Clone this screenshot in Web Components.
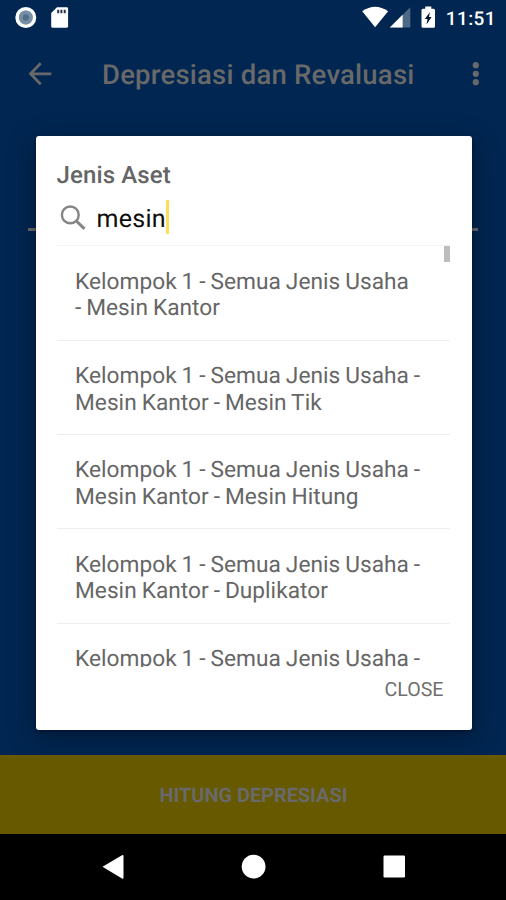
<!DOCTYPE html>
<html lang="id">
<head>
<meta charset="utf-8">
<title>Depresiasi dan Revaluasi</title>
<style>
html,body{margin:0;height:100%;overflow:hidden;background:#002651;font-family:Roboto,"Liberation Sans",sans-serif;text-rendering:geometricPrecision}
</style>
</head>
<body>
<depreciation-screen></depreciation-screen>
<script>
const define=(name,html)=>customElements.define(name,class extends HTMLElement{
  constructor(){super();const t=document.createElement('template');t.innerHTML=html;this.attachShadow({mode:'open'}).append(t.content.cloneNode(true));}
});

define('status-bar',`<style>
:host{display:flex;height:36px;color:#fff;box-sizing:border-box}
svg{display:block;flex:none}
.time{font-size:19px;font-weight:500;line-height:37px;letter-spacing:.4px;margin-left:10px;white-space:nowrap}
.sp{flex:1}
.end{width:10px}
</style>
<svg width="80" height="36"><circle cx="25.8" cy="17.5" r="8.7" fill="#8fa5b9" stroke="#fff" stroke-width="3.6"/><circle cx="25.8" cy="17.5" r="7" fill="#7890a5"/><circle cx="25.8" cy="17.5" r="3.2" fill="#507089"/><path d="M57 7.3h9.7q1.4 0 1.4 1.4v17.6q0 1.4-1.4 1.4H52.6q-1.4 0-1.4-1.4V13z" fill="#fff"/><path d="M57.2 9.7h2v3.6h-2zM60.4 9.7h2v3.6h-2zM63.7 9.7h2v3.6h-2z" fill="#26364c"/></svg>
<span class="sp"></span>
<svg width="77" height="36" viewBox="359.2 0 77 36"><path d="M362.4 11.3Q375.3 2.2 388.3 11.3L375.3 27.2z" fill="#fff"/><path d="M390 27.5L410.5 7.3V27.5z" fill="#4c6985"/><path d="M390 27.5L402.8 14.8V27.5z" fill="#fff"/><path d="M425.5 6.5h6v2.2h2.2q1.5 0 1.5 1.5v16q0 1.5-1.5 1.5h-10.5q-1.5 0-1.5-1.5v-16q0-1.5 1.5-1.5h2.3z" fill="#fff"/><path d="M430.2 12l-5.2 7h2.7l-1 5.4 5.1-7.4h-2.7z" fill="#00152f"/></svg>
<span class="time">11:51</span><span class="end"></span>`);

define('app-bar',`<style>
:host{display:flex;align-items:center;height:78px;color:#696969}
svg{display:block;flex:none}
h1{margin:0 auto 0 0;font-size:27.5px;line-height:32px;font-weight:500;white-space:nowrap;letter-spacing:.22px}
</style>
<svg width="102" height="78"><path d="M51.3 37.8H31M40.7 27.3L30.5 37.8l10.2 10.4" fill="none" stroke="currentColor" stroke-width="2.7"/></svg>
<h1><slot></slot></h1>
<svg width="60" height="78" viewBox="446 36 60 78" fill="currentColor"><circle cx="475.8" cy="65.2" r="3.1"/><circle cx="475.8" cy="73.8" r="3.1"/><circle cx="475.8" cy="82.2" r="3.1"/></svg>`);

define('search-field',`<style>
:host{display:flex;height:36px;margin-top:11px;color:#0c0c0c}
svg{display:block;flex:none}
.v{font-size:25px;line-height:40px;letter-spacing:.3px}
.c{width:3px;height:34px;background:#ffdd55;margin-top:.5px}
</style>
<svg width="40" height="36" fill="none" stroke="#858585"><circle cx="13.3" cy="14.9" r="8.4" stroke-width="2.4"/><path d="M19.1 20.7l8.4 8.2" stroke-width="3"/></svg>
<span class="v"><slot></slot></span><i class="c"></i>`);

define('asset-option',`<style>
:host{display:block;box-sizing:border-box;height:94.3px;border-bottom:1.4px solid #eee;padding:22.2px 0 0 18.5px;font-size:22.7px;line-height:26.7px;color:#666;letter-spacing:.02px;word-spacing:-.7px;white-space:nowrap}
</style><slot></slot>`);

define('option-list',`<style>
:host{display:block;position:relative;height:421px;overflow:hidden;border-top:1.4px solid #f3f3f3}
.bar{position:absolute;right:0;top:0;width:6px;height:16px;background:#bdbdbd}
</style><slot></slot><i class="bar"></i>`);

define('search-dialog',`<style>
:host{display:flex;flex-direction:column;box-sizing:border-box;width:436px;height:594px;margin-left:1px;padding:24.5px 21px 0 21px;background:#fff;border-radius:3px;box-shadow:0 8px 28px 2px rgba(0,0,0,.27),0 2px 4px rgba(0,0,20,.35);position:relative}
h2{margin:0;height:28px;font-size:24px;line-height:28px;font-weight:500;color:#656565;white-space:nowrap;letter-spacing:.12px}
option-list{flex:none;margin-top:9.6px;width:393px}
.a{align-self:flex-end;margin:10.6px 7px 0 0;font-size:19.6px;line-height:23px;color:#707070;letter-spacing:0}
</style>
<h2><slot name="title"></slot></h2>
<search-field><slot name="query"></slot></search-field>
<option-list><slot></slot></option-list>
<span class="a"><slot name="action"></slot></span>`);

define('submit-button',`<style>
:host{display:flex;align-items:center;justify-content:center;box-sizing:border-box;padding:4px 0 0 1px;height:78.5px;background:#665900;color:#696969;font-size:19.9px;line-height:24px;font-weight:700;white-space:nowrap}
</style><span><slot></slot></span>`);

define('nav-bar',`<style>
:host{display:block;height:66.5px;background:#000}
svg{display:block}
</style>
<svg width="506" height="66" viewBox="0 834 506 66" fill="#fff"><path d="M102.5 866.7L122 855.3q1.5-.7 1.5 1v21.3q0 1.7-1.5 1z"/><circle cx="253.6" cy="866.7" r="11.9"/><rect x="383.5" y="855.5" width="21.5" height="22" rx="1.2"/></svg>`);

define('depreciation-screen',`<style>
:host{display:flex;flex-direction:column;height:900px;width:506px;overflow:hidden}
main{flex:1;display:grid;justify-items:center;align-content:start;padding-top:22.4px}
main>*{grid-area:1/1}
.field{width:450px;height:2.5px;margin-top:92px;background:#69696b}
submit-button,nav-bar{position:relative}
</style>
<status-bar></status-bar>
<app-bar>Depresiasi dan Revaluasi</app-bar>
<main><div class="field"></div>
<search-dialog>
<span slot="title">Jenis Aset</span><span slot="query">mesin</span>
<asset-option>Kelompok 1 - Semua Jenis Usaha<br>- Mesin Kantor</asset-option>
<asset-option>Kelompok 1 - Semua Jenis Usaha -<br>Mesin Kantor - Mesin Tik</asset-option>
<asset-option>Kelompok 1 - Semua Jenis Usaha -<br>Mesin Kantor - Mesin Hitung</asset-option>
<asset-option>Kelompok 1 - Semua Jenis Usaha -<br>Mesin Kantor - Duplikator</asset-option>
<asset-option>Kelompok 1 - Semua Jenis Usaha -</asset-option>
<span slot="action">CLOSE</span>
</search-dialog></main>
<submit-button>HITUNG DEPRESIASI</submit-button>
<nav-bar></nav-bar>`);
</script>
</body>
</html>
